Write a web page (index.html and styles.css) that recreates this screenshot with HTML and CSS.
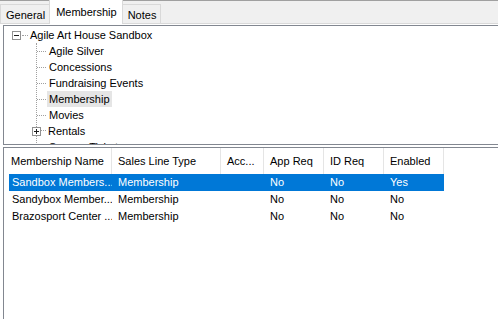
FILE: index.html
```html
<!DOCTYPE html>
<html lang="en">
<head>
    <meta charset="UTF-8">
    <title>Membership</title>
    <link rel="stylesheet" href="styles.css">
</head>
<body>
    <!-- Abas -->
    <div class="tabstrip">
        <div class="tab">General</div>
        <div class="tab active">Membership</div>
        <div class="tab">Notes</div>
    </div>

    <!-- Arvore de categorias -->
    <div class="tree">
        <div class="node root">
            <span class="expander minus"></span>
            <span class="stub"></span>
            <span class="label">Agile Art House Sandbox</span>
        </div>
        <div class="children">
            <div class="node child"><span class="label">Agile Silver</span></div>
            <div class="node child"><span class="label">Concessions</span></div>
            <div class="node child"><span class="label">Fundraising Events</span></div>
            <div class="node child"><span class="label selected">Membership</span></div>
            <div class="node child"><span class="label">Movies</span></div>
            <div class="node child has-box"><span class="expander plus"></span><span class="label">Rentals</span></div>
            <div class="node child"><span class="label">Season Tickets</span></div>
        </div>
    </div>

    <div class="splitter"></div>

    <!-- Lista de memberships -->
    <div class="list">
        <div class="header">
            <div class="hcell first">Membership Name</div>
            <div class="hcell">Sales Line Type</div>
            <div class="hcell">Acc...</div>
            <div class="hcell">App Req</div>
            <div class="hcell">ID Req</div>
            <div class="hcell">Enabled</div>
        </div>
        <div class="row sel">
            <div class="cell first">Sandbox Members...</div>
            <div class="cell">Membership</div>
            <div class="cell"></div>
            <div class="cell">No</div>
            <div class="cell">No</div>
            <div class="cell">Yes</div>
        </div>
        <div class="row">
            <div class="cell first">Sandybox Member...</div>
            <div class="cell">Membership</div>
            <div class="cell"></div>
            <div class="cell">No</div>
            <div class="cell">No</div>
            <div class="cell">No</div>
        </div>
        <div class="row">
            <div class="cell first">Brazosport Center ...</div>
            <div class="cell">Membership</div>
            <div class="cell"></div>
            <div class="cell">No</div>
            <div class="cell">No</div>
            <div class="cell">No</div>
        </div>
    </div>
</body>
</html>
```

FILE: styles.css
```css
body {
    margin: 0;
    width: 498px;
    height: 319px;
    overflow: hidden;
    background: #fff;
    font-family: 'Liberation Sans', Arial, sans-serif;
    font-size: 11px;
    color: #000;
}

/* Abas */
.tabstrip {
    box-sizing: border-box;
    height: 24px;
    background: #f0f0f0;
    border-top: 1px solid #a0a0a0;
    border-bottom: 1px solid #d9d9d9;
    display: flex;
    align-items: flex-end;
}

.tab {
    box-sizing: border-box;
    height: 19px;
    padding: 4px 4px 0 5px;
    border: 1px solid #d9d9d9;
    border-bottom: none;
    background: #f0f0f0;
    margin-right: -1px;
}

.tab.active {
    height: 24px;
    padding: 6px 5px 0 6px;
    background: #fff;
    margin-bottom: -1px;
    margin-top: -1px;
    border-top: none;
    position: relative;
    z-index: 1;
}

/* Arvore */
.tree {
    box-sizing: border-box;
    margin: 1px 0 0 3px;
    padding-top: 1px;
    height: 120px;
    border: 1px solid #828790;
    border-right: none;
    overflow: hidden;
}

.node {
    height: 16px;
    display: flex;
    align-items: center;
    white-space: nowrap;
}

.root {
    padding-left: 8px;
}

.expander {
    box-sizing: border-box;
    width: 9px;
    height: 9px;
    border: 1px solid #919191;
    background: #fff;
    position: relative;
    flex: none;
}

.expander::before {
    content: "";
    position: absolute;
    left: 1px;
    top: 3px;
    width: 5px;
    height: 1px;
    background: #1e1e1e;
}

.expander.plus::after {
    content: "";
    position: absolute;
    left: 3px;
    top: 1px;
    width: 1px;
    height: 5px;
    background: #1e1e1e;
}

.stub {
    width: 6px;
    margin-left: 1px;
    border-top: 1px dotted #a0a0a0;
}

.label {
    padding: 2px 2px 1px 2px;
    line-height: 13px;
}

.children {
    margin-left: 32px;
    border-left: 1px dotted #a0a0a0;
}

.child::before {
    content: "";
    width: 9px;
    border-top: 1px dotted #a0a0a0;
    flex: none;
}

.child .label {
    margin-left: 1px;
}

.child.has-box {
    margin-left: -5px;
}

.child.has-box::before {
    display: none;
}

.child.has-box .label {
    margin-left: 0;
    position: relative;
    padding-left: 7px;
}

.child.has-box .label::before {
    content: "";
    position: absolute;
    left: 0;
    top: 7px;
    width: 5px;
    border-top: 1px dotted #a0a0a0;
}

.label.selected {
    background: #e5e5e5;
}

.splitter {
    height: 2px;
}

/* Lista */
.list {
    box-sizing: border-box;
    margin-left: 3px;
    border-top: 1px solid #828790;
    border-left: 1px solid #828790;
    height: 172px;
}

.header {
    display: grid;
    grid-template-columns: 108px 109px 43px 60px 60px 60px;
    height: 26px;
}

.hcell {
    border-right: 1px solid #e5e5e5;
    padding-left: 6px;
    line-height: 27px;
    white-space: nowrap;
    overflow: hidden;
}

.hcell.first {
    padding-left: 7px;
}

.row {
    display: grid;
    grid-template-columns: 103px 109px 43px 60px 60px 60px;
    width: 435px;
    padding-left: 5px;
    height: 17px;
    line-height: 17px;
}

.row.sel {
    background: #0078d7;
    background-clip: content-box;
    color: #fff;
}

.cell {
    padding-left: 6px;
    white-space: nowrap;
    overflow: hidden;
}

.cell.first {
    padding-left: 3px;
}
```
